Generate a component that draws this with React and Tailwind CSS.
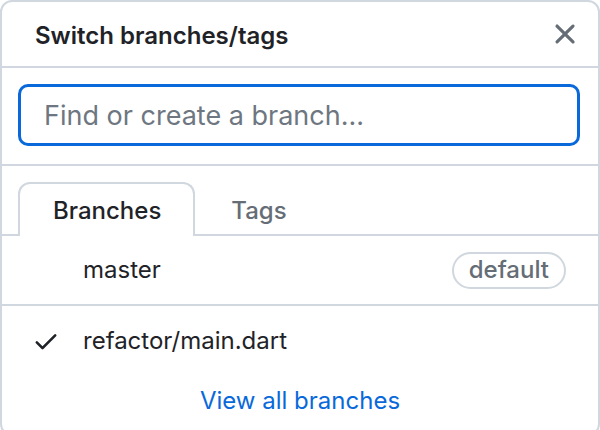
import React, { useState } from "react";

function XIcon({ className }) {
  return (
    <svg viewBox="0 0 16 16" className={className} fill="currentColor">
      <path d="M3.72 3.72a.75.75 0 0 1 1.06 0L8 6.94l3.22-3.22a.749.749 0 0 1 1.275.326.749.749 0 0 1-.215.734L9.06 8l3.22 3.22a.749.749 0 0 1-.326 1.275.749.749 0 0 1-.734-.215L8 9.06l-3.22 3.22a.751.751 0 0 1-1.042-.018.751.751 0 0 1-.018-1.042L6.94 8 3.72 4.78a.75.75 0 0 1 0-1.06Z" />
    </svg>
  );
}

function CheckIcon({ className }) {
  return (
    <svg viewBox="0 0 16 16" className={className} fill="currentColor">
      <path d="M13.78 4.22a.75.75 0 0 1 0 1.06l-7.25 7.25a.75.75 0 0 1-1.06 0L2.22 9.28a.751.751 0 0 1 .018-1.042.751.751 0 0 1 1.042-.018L6 10.94l6.72-6.72a.75.75 0 0 1 1.06 0Z" />
    </svg>
  );
}

const branches = [
  { name: "master", isDefault: true, current: false },
  { name: "refactor/main.dart", isDefault: false, current: true },
];

export default function App() {
  const [tab, setTab] = useState("branches");
  const [query, setQuery] = useState("");

  return (
    <div className="w-[600px] h-[436px] bg-white border-2 border-[#d0d7de] rounded-[12px] overflow-hidden font-['Inter',sans-serif] text-[#1f2328]">
      {/* Header */}
      <div className="flex items-center justify-between h-[66px] pl-[33px] pr-[16px] border-b-2 border-[#d0d7de]">
        <h1 className="pt-[3px] text-[24px] font-semibold">Switch branches/tags</h1>
        <button className="text-[#656d76]">
          <XIcon className="w-[34px] h-[34px]" />
        </button>
      </div>

      {/* Filter */}
      <div className="pl-4 pr-[18px] pt-[16px] pb-[18px] border-b-2 border-[#d0d7de]">
        <input
          value={query}
          onChange={(e) => setQuery(e.target.value)}
          placeholder="Find or create a branch..."
          className="w-full h-[62px] px-[23px] text-[27px] border-[3px] border-[#0969da] rounded-[10px] outline-none placeholder:text-[#6e7781]"
        />
      </div>

      {/* Tabs */}
      <div className="flex px-4 pt-4 border-b-2 border-[#d0d7de]">
        <button
          onClick={() => setTab("branches")}
          className={
            "h-[54px] -mb-[2px] pl-[33px] pr-[32px] pt-[2px] border-2 border-b-0 rounded-t-[12px] bg-white text-[24px] font-medium " +
            (tab === "branches"
              ? "border-[#d0d7de] text-[#1f2328]"
              : "border-transparent text-[#656d76]")
          }
        >
          Branches
        </button>
        <button
          onClick={() => setTab("tags")}
          className={
            "h-[54px] -mb-[2px] px-[34px] pt-[2px] border-2 border-b-0 rounded-t-[12px] text-[24px] font-medium " +
            (tab === "tags"
              ? "border-[#d0d7de] bg-white text-[#1f2328]"
              : "border-transparent text-[#656d76]")
          }
        >
          Tags
        </button>
      </div>

      {/* Items */}
      {branches.map((b, i) => (
        <div
          key={b.name}
          className={
            "flex items-center h-[70px] pl-[30px] pr-[32px] gap-[23px] " +
            (i < branches.length - 1 ? "border-b-2 border-[#d0d7de]" : "")
          }
        >
          <span className="w-[28px] h-[28px] flex-shrink-0">
            {b.current && <CheckIcon className="w-[28px] h-[28px]" />}
          </span>
          <span className="flex-1 text-[24px]">{b.name}</span>
          {b.isDefault && (
            <span className="h-[37px] px-[15px] flex items-center rounded-full border-2 border-[#d0d7de] text-[24px] font-medium text-[#656d76]">
              default
            </span>
          )}
        </div>
      ))}

      {/* Footer */}
      <div className="flex items-center justify-center h-[50px]">
        <a href="#" className="text-[24px] text-[#0969da]">
          View all branches
        </a>
      </div>
    </div>
  );
}
